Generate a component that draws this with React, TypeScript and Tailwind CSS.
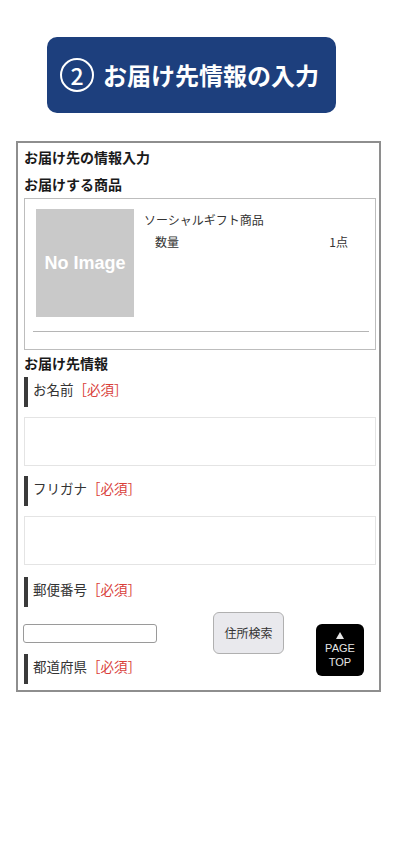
import React from "react";

const jp = { fontFamily: '"Noto Sans CJK JP", "Noto Sans", sans-serif' };

function Label({ text }: { text: string }) {
  return (
    <div className="flex h-[30px] items-start">
      <div className="h-[30px] w-[4px] bg-[#3a3a3a]" />
      <div className="ml-[5px] mt-[3px] text-[13.5px] leading-[18px] text-[#333]">
        {text}
        <span className="text-[#d9403a]">［必須］</span>
      </div>
    </div>
  );
}

export default function App() {
  return (
    <div className="relative h-[850px] w-[400px] bg-white" style={jp}>
      <div className="pt-[37px]">
        <div className="ml-[47px] flex h-[76px] w-[289px] items-center rounded-[10px] bg-[#1d3f7d] pl-[13px]">
          <div className="flex h-[34px] w-[34px] items-center justify-center rounded-full border-[2.5px] border-white text-[23px] font-medium leading-none text-white">
            2
          </div>
          <div className="ml-[9px] text-[24px] font-bold leading-none text-white">
            お届け先情報の入力
          </div>
        </div>
      </div>

      <div className="ml-[16px] mt-[28px] w-[365px] border-2 border-[#8e8e8e] pb-[6px] pl-[6px] pr-[3px] pt-[1px]">
        <div className="text-[14px] font-bold leading-[27px] text-[#1a1a1a]">お届け先の情報入力</div>
        <div className="text-[14px] font-bold leading-[27px] text-[#1a1a1a]">お届けする商品</div>
        <div className="h-[152px] w-[352px] border border-[#bdbdbd] pl-[11px] pt-[10px]">
          <div className="flex">
            <div className="flex h-[108px] w-[98px] items-center justify-center bg-[#c9c9c9]">
              <span className="text-[18px] font-bold text-white" style={{ fontFamily: '"Liberation Sans", Arial, sans-serif' }}>
                No Image
              </span>
            </div>
            <div className="ml-[10px] w-[204px] pt-[2px] text-[12px] text-[#333]">
              <div className="leading-[18px]">ソーシャルギフト商品</div>
              <div className="mt-[4px] flex justify-between pl-[11px] leading-[18px]">
                <span>数量</span>
                <span>1点</span>
              </div>
            </div>
          </div>
          <div className="ml-[-3px] mt-[14px] h-px w-[336px] bg-[#b5b5b5]" />
        </div>
        <div className="text-[14px] font-bold leading-[27px] text-[#1a1a1a]">お届け先情報</div>
        <Label text="お名前" />
        <div className="mt-[10px] h-[49px] w-[352px] border border-[#e4e4e4]" />
        <div className="mt-[10px]">
          <Label text="フリガナ" />
        </div>
        <div className="mt-[10px] h-[49px] w-[352px] border border-[#e4e4e4]" />
        <div className="mt-[12px]">
          <Label text="郵便番号" />
        </div>
        <div className="mt-[5px] flex h-[42px] items-center">
          <div className="ml-[-1px] h-[19px] w-[134px] rounded-[3px] border border-[#9a9a9a]" />
          <div className="ml-[56px] flex h-[42px] w-[71px] items-center justify-center rounded-[6px] border border-[#b0b0b0] bg-[#e9e9ed] text-[12px] text-[#333]">
            住所検索
          </div>
        </div>
        <Label text="都道府県" />
      </div>

      <div
        className="absolute left-[316px] top-[624px] flex h-[52px] w-[48px] flex-col items-center rounded-[6px] bg-black pt-[8px] text-[11px] leading-[14px] text-[#e6e6e6]"
        style={{ fontFamily: '"Liberation Sans", Arial, sans-serif' }}
      >
        <svg width="8" height="7" viewBox="0 0 8 7" className="mb-[2px]">
          <polygon points="4,0 8,7 0,7" fill="#e6e6e6" />
        </svg>
        <span>PAGE</span>
        <span>TOP</span>
      </div>
    </div>
  );
}
